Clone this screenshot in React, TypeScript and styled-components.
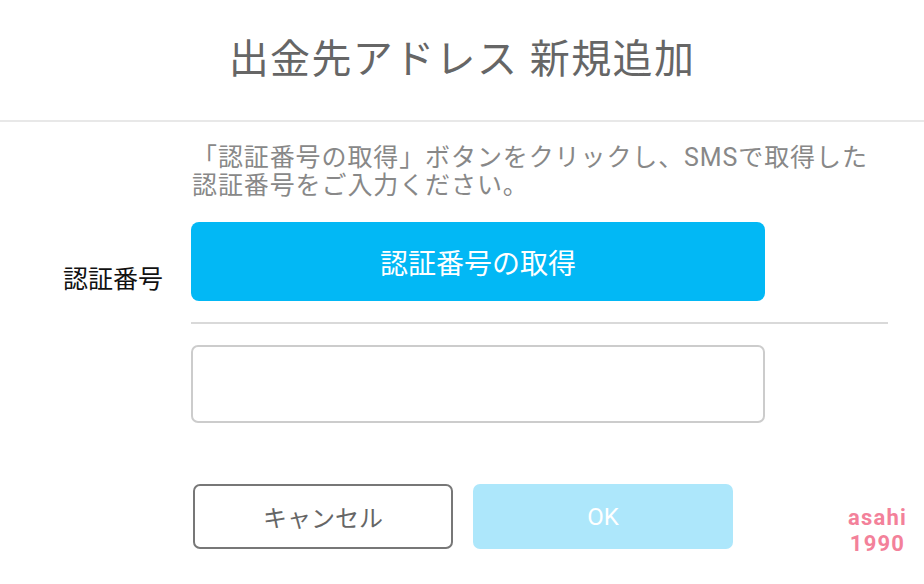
import React from "react";
import styled, { createGlobalStyle } from "styled-components";

const Global = createGlobalStyle`
  html, body { margin: 0; padding: 0; background: #fff; }
  body { font-family: Roboto, "Noto Sans CJK JP", sans-serif; }
  * { box-sizing: border-box; }
`;

const Page = styled.div`
  position: relative;
  width: 924px;
  height: 584px;
  overflow: hidden;
  background: #fff;
`;

const Header = styled.header`
  height: 120px;
  display: flex;
  align-items: center;
  justify-content: center;
`;

const Title = styled.h1`
  margin: 0;
  font-family: Roboto, "Noto Sans CJK JP", sans-serif;
  font-size: 40px;
  font-weight: 400;
  color: #666;
  letter-spacing: 1.4px;
  line-height: 1;
`;

const Rule = styled.div`
  height: 2px;
  background: #e8e8e8;
`;

const Body = styled.div`
  display: grid;
  grid-template-columns: 191px 697px;
`;

const LabelCell = styled.div<{ $top: number }>`
  padding-left: 63px;
  padding-top: ${(p) => p.$top}px;
  font-size: 25px;
  line-height: 25px;
  color: #111;
`;

const Column = styled.div`
  display: flex;
  flex-direction: column;
  align-items: flex-start;
`;

const Note = styled.p`
  margin: 22px 0 0;
  padding-left: 1px;
  font-size: 25px;
  line-height: 28px;
  color: #888;
  letter-spacing: 0.9px;
`;

const Primary = styled.button`
  margin-top: 22px;
  width: 574px;
  height: 79px;
  border: none;
  border-radius: 8px;
  background: #02b8f5;
  color: #fff;
  font-family: Roboto, "Noto Sans CJK JP", sans-serif;
  font-size: 28px;
  font-weight: 400;
  padding: 0;
`;

const Divider = styled.div`
  margin-top: 21px;
  width: 697px;
  height: 2px;
  background: #d9d9d9;
`;

const Input = styled.input`
  margin-top: 21px;
  width: 574px;
  height: 78px;
  border: 2px solid #cccccc;
  border-radius: 7px;
  background: #fff;
  outline: none;
`;

const Actions = styled.div`
  margin-top: 61px;
  margin-left: 2px;
  display: flex;
  gap: 20px;
`;

const ActionButton = styled.button<{ $variant: "cancel" | "ok" }>`
  width: 260px;
  height: 65px;
  border-radius: 7px;
  font-family: Roboto, "Noto Sans CJK JP", sans-serif;
  font-size: 24px;
  padding: 0;
  border: ${(p) => (p.$variant === "cancel" ? "2px solid #777" : "none")};
  background: ${(p) => (p.$variant === "cancel" ? "#fff" : "#ade7fb")};
  color: ${(p) => (p.$variant === "cancel" ? "#666" : "#fff")};
`;

const Watermark = styled.div`
  position: absolute;
  right: 17px;
  bottom: 27px;
  display: flex;
  flex-direction: column;
  align-items: center;
  font-family: Roboto, sans-serif;
  font-weight: 700;
  font-size: 22px;
  letter-spacing: 1.2px;
  line-height: 26px;
  color: #f3819a;
`;

const WatermarkLine = styled.span`
  display: block;
`;

export default function App() {
  return (
    <Page>
      <Global />
      <Header>
        <Title>出金先アドレス 新規追加</Title>
      </Header>
      <Rule />
      <Body>
        <LabelCell $top={145}>認証番号</LabelCell>
        <Column>
          <Note>
            「認証番号の取得」ボタンをクリックし、SMSで取得した
            <br />
            認証番号をご入力ください。
          </Note>
          <Primary>認証番号の取得</Primary>
          <Divider />
          <Input />
          <Actions>
            <ActionButton $variant="cancel">キャンセル</ActionButton>
            <ActionButton $variant="ok">OK</ActionButton>
          </Actions>
        </Column>
      </Body>
      <Watermark>
        <WatermarkLine>asahi</WatermarkLine>
        <WatermarkLine>1990</WatermarkLine>
      </Watermark>
    </Page>
  );
}
